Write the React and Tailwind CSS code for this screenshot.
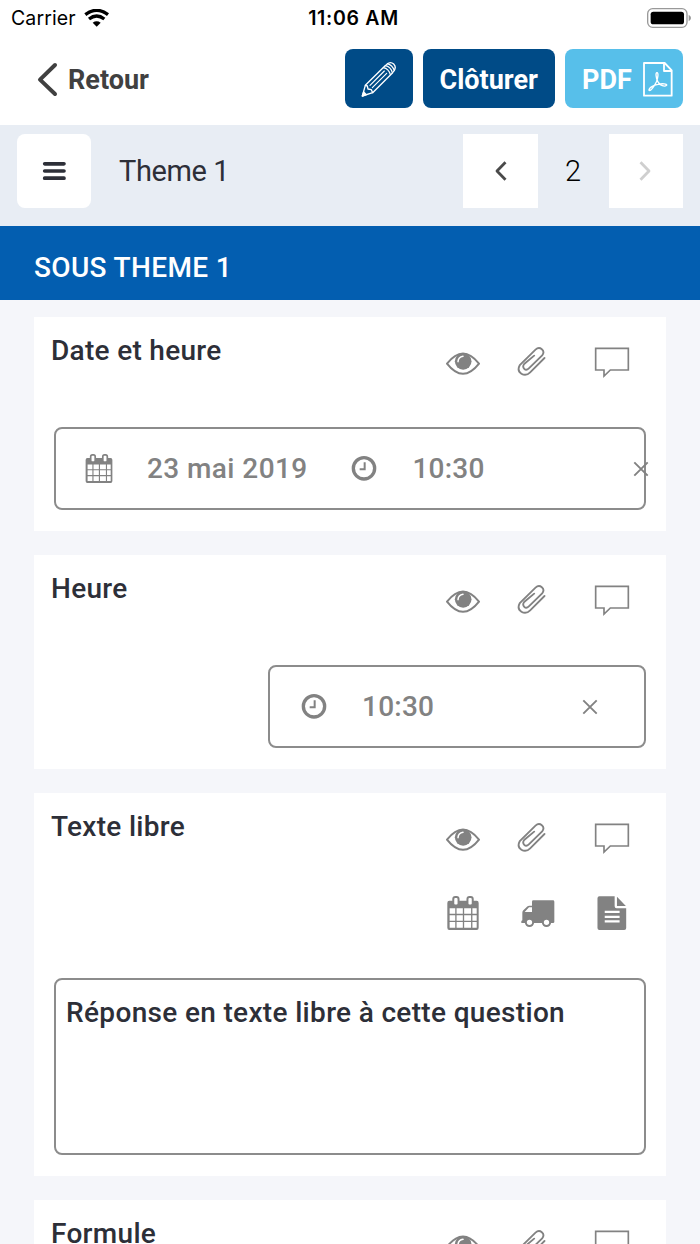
import React from "react";

const Wifi = () => (
  <svg width="25" height="18" viewBox="252 24 75 54" fill="none" stroke="#000" strokeWidth="10">
    <path d="M256 41 Q290 15 324 41" />
    <path d="M267 54 Q290 36 313 54" />
    <path d="M278 65 Q290 57 302 65 L290 77Z" fill="#000" stroke="none" />
  </svg>
);

const Battery = () => (
  <svg width="44" height="20" viewBox="921 21 132 60">
    <rect x="923" y="23" width="118" height="56" rx="15" fill="none" stroke="#999" strokeWidth="4" />
    <rect x="932" y="32" width="100" height="38" rx="8" fill="#000" />
    <path d="M1046 41 Q1053 45 1053 51 Q1053 57 1046 61Z" fill="#999" />
  </svg>
);

const BackChevron = () => (
  <svg width="21" height="35" viewBox="111 185 63 105" fill="none" stroke="#404040" strokeWidth="12" strokeLinecap="round" strokeLinejoin="round">
    <path d="M165 194 L120 238 L165 281" />
  </svg>
);

const Pencil = () => (
  <svg width="36" height="36" viewBox="63 184 108 108" fill="none" stroke="#fff" strokeWidth="4" strokeLinejoin="round" strokeLinecap="round">
    <path d="M67 289 L76 257 L137 197 Q150 183 161 193 Q172 204 158 219 L98 279 Z" />
    <path d="M76 257 L82 259 L84 268 L94 270 L98 279" />
    <path d="M67 289 L71 277 L79 285 Z" fill="#fff" />
    <path d="M90 257 L133 214 M97 264 L140 221" strokeWidth="3.5" />
    <path d="M130 204 Q146 207 151 225 M136 198 Q152 201 157 219 M142 192 Q157 196 163 213" strokeWidth="3.5" />
  </svg>
);

const PdfFile = () => (
  <svg width="30" height="35" viewBox="908 187 90 105" fill="none" stroke="#fff" strokeWidth="5.5" strokeLinejoin="round">
    <path d="M911 190 H973 L994 212 V288 H911 Z" />
    <path d="M971 190 V214 H994" />
    <path d="M950 219 C945 219 947 234 952 245 C959 259 973 262 979 257 C981 252 966 251 953 254 C941 256 925 264 926 272 C931 276 942 259 948 247 C953 235 955 219 950 219Z" strokeWidth="4" />
  </svg>
);

const Menu = () => (
  <svg width="24" height="20" viewBox="127 107 72 60" fill="none" stroke="#2d2f38" strokeWidth="11" strokeLinecap="round">
    <path d="M135 115.500 H193 M135 137 H193 M135 158.500 H193" />
  </svg>
);

const Eye = () => (
  <svg width="34" height="24" viewBox="48 61 102 72" fill="none" stroke="#828282" strokeWidth="6">
    <path d="M51 99 Q99 38 147 99 Q99 160 51 99Z" strokeLinejoin="round" />
    <circle cx="99.500" cy="92" r="25" fill="#828282" stroke="none" />
    <path d="M84 93 Q85 79 99 77" stroke="#fff" strokeWidth="4.500" strokeLinecap="round" />
  </svg>
);

const Clip = () => (
  <svg width="40" height="30" viewBox="260.500 50 120 90" fill="none" stroke="#828282" strokeWidth="5.500" strokeLinecap="round">
    <path d="M343 83 L300 126 C284 142 256 128 269 104 L316 58 C329 46 347 61 336 75 L296 114 C286 124 274 112 282 101 L312 76" />
  </svg>
);

const Comment = () => (
  <svg width="36" height="32" viewBox="492 50 108 96" fill="none" stroke="#828282" strokeWidth="5">
    <path d="M497 54 H595 V119 H541 L522 137 V119 H497 Z" />
  </svg>
);

const Calendar = ({ small }) => (
  <svg width={small ? 28 : 32} height={small ? 29 : 34} viewBox="51 257 97 103">
    <path fill="#828282" fillRule="evenodd" d="M58 271 H141 Q147 271 147 278 V353 Q147 360 141 360 H58 Q52 360 52 353 V278 Q52 271 58 271Z M59 294 V311 H76 V294Z M80 294 V311 H99 V294Z M103 294 V311 H124 V294Z M128 294 V311 H141 V294Z M59 315 V332 H76 V315Z M80 315 V332 H99 V315Z M103 315 V332 H124 V315Z M128 315 V332 H141 V315Z M59 336 V353 H76 V336Z M80 336 V353 H99 V336Z M103 336 V353 H124 V336Z M128 336 V353 H141 V336Z" />
    <rect x="70" y="260" width="16" height="26" rx="6" fill="#fff" stroke="#828282" strokeWidth="6" />
    <rect x="113" y="260" width="16" height="26" rx="6" fill="#fff" stroke="#828282" strokeWidth="6" />
  </svg>
);

const Truck = () => (
  <svg width="34" height="27" viewBox="275 271 102 81">
    <path fill="#828282" fillRule="evenodd" d="M312 272 H371 Q375 272 375 276 V337 Q375 340 371 340 H276 V334 L279 332 V309 Q279 305 282 302 L293 291 Q296 288 300 288 H308 V276 Q308 272 312 272Z M286 307 H308 V293 H299Z" />
    <circle cx="300.500" cy="338" r="11" fill="#fff" stroke="#828282" strokeWidth="6" />
    <circle cx="351.500" cy="338" r="11" fill="#fff" stroke="#828282" strokeWidth="6" />
  </svg>
);

const Doc = () => (
  <svg width="30" height="34" viewBox="500 257 90 103">
    <path fill="#828282" d="M507 258 H553 V288 Q553 294 559 294 H588 V354 Q588 360 582 360 H507 Q501 360 501 354 V264 Q501 258 507 258Z M560 259 L587 287 H560Z" />
    <path d="M523 305 H568 M523 320 H568 M523 334 H568" stroke="#fff" strokeWidth="7" />
  </svg>
);

const Clock = () => (
  <svg width="26" height="26" viewBox="34 121 78 78" fill="none" stroke="#828282">
    <circle cx="73" cy="158" r="32" strokeWidth="10" />
    <path d="M75 140 V161 H60" strokeWidth="6" />
  </svg>
);

const Cross = () => (
  <svg width="16" height="16" viewBox="0 0 16 16" fill="none" stroke="#828282" strokeWidth="1.900">
    <path d="M1.300 1.300 L14.700 14.700 M14.700 1.300 L1.300 14.700" />
  </svg>
);

const Angle = ({ flip }) => (
  <svg width="14" height="22" viewBox="0 0 14 22" className={flip ? "rotate-180" : ""} fill="none" stroke={flip ? "#cfcfcf" : "#4a4a4a"} strokeWidth="2.800">
    <path d="M12.500 2.200 L4 11 L12.500 19.800" strokeLinejoin="round" />
  </svg>
);

function Card({ title, className, tools, children }) {
  return (
    <section className={`w-[631.500px] shrink-0 bg-white ${className}`}>
      <div className="flex justify-between pl-[17px] pr-[16px]">
        <h2 className="mt-[18px] h-8 text-[28px] leading-8 font-medium tracking-[0.3px] text-[#2d2f38]">{title}</h2>
        <div className="mt-[28.300px] grid w-[224px] grid-cols-3 items-center justify-items-center">
          <div className="pt-[1px]"><Eye /></div>
          <Clip />
          <div className="mt-[2px]"><Comment /></div>
          {tools}
        </div>
      </div>
      {children}
    </section>
  );
}

export default function App() {
  return (
    <div className="flex h-[1244px] w-[700px] flex-col overflow-hidden bg-[#f5f6fa] font-['Roboto',sans-serif]">
      <div className="grid h-[36px] shrink-0 grid-cols-3 items-center bg-white pl-[11px] pr-[9px] font-['Inter',sans-serif] text-[19.500px] text-black">
        <div className="flex items-center gap-[8px]">
          <span className="pt-px tracking-[0.1px]">Carrier</span>
          <Wifi />
        </div>
        <span className="pt-px pl-[5px] text-center font-semibold tracking-[0.700px]">11:06 AM</span>
        <div className="flex justify-end"><Battery /></div>
      </div>

      <header className="flex h-[89px] shrink-0 items-start bg-white pl-[37px] pr-[17px] pt-[13px] text-[27px] font-bold">
        <div className="flex h-[60px] items-center gap-[10px] text-[#404040]">
          <BackChevron />
          <span className="pt-[2px]">Retour</span>
        </div>
        <div className="ml-auto flex gap-[10px] text-white">
          <button className="flex h-[59px] w-[67.500px] items-center justify-center rounded-lg bg-[#004b87]"><Pencil /></button>
          <button className="flex h-[59px] w-[132.500px] items-center justify-center rounded-lg bg-[#004b87] pt-[3px]">Clôturer</button>
          <button className="flex h-[59px] w-[118px] items-center gap-[11px] rounded-lg bg-[#57bfea] pl-[17px]">
            <span className="pt-[3px]">PDF</span>
            <div className="pt-[2px]"><PdfFile /></div>
          </button>
        </div>
      </header>

      <nav className="flex h-[101.400px] shrink-0 items-start bg-[#e8edf4] px-[17px] pt-[9px] text-[29px]">
        <button className="flex size-[74px] items-center justify-center rounded-lg bg-white"><Menu /></button>
        <span className="ml-[28px] leading-[74px] tracking-[-0.400px] text-[#2d2f38]">Theme 1</span>
        <div className="ml-auto flex">
          <button className="flex h-[74px] w-[74.500px] items-center justify-center bg-white"><Angle /></button>
          <span className="w-[71px] text-center leading-[74px] font-light text-black">2</span>
          <button className="flex h-[74px] w-[74.500px] items-center justify-center bg-white"><Angle flip /></button>
        </div>
      </nav>

      <div className="h-[74px] shrink-0 bg-[#035eb0] pl-[34px] text-[28px] leading-[84px] font-medium tracking-[0.350px] text-white">SOUS THEME 1</div>

      <main className="flex flex-col gap-[24px] pl-[34px] pt-[16.400px]">
        <Card title="Date et heure" className="h-[214.200px]">
          <div className="mx-[19.600px] mt-[48px] flex h-[83px] items-center rounded-lg border-2 border-[#8c8c8c] pl-[29.400px] text-[28px] font-medium text-[#828282]">
            <Calendar small />
            <span className="ml-[34px] w-[160px] whitespace-nowrap tracking-[0.420px]">23 mai 2019</span>
            <div className="ml-[44.500px]"><Clock /></div>
            <span className="ml-[35px] tracking-[0.200px]">10:30</span>
            <div className="-mr-[4.700px] ml-auto"><Cross /></div>
          </div>
        </Card>

        <Card title="Heure" className="h-[214.200px]">
          <div className="mr-[19.600px] ml-[234.400px] mt-[48px] flex h-[83px] items-center rounded-lg border-2 border-[#8c8c8c] pl-[30.200px] text-[28px] font-medium text-[#828282]">
            <Clock />
            <span className="ml-[35.500px] tracking-[0.200px]">10:30</span>
            <div className="mr-[46px] ml-auto"><Cross /></div>
          </div>
        </Card>

        <Card
          title="Texte libre"
          className="h-[383px]"
          tools={
            <>
              <div className="mt-[40.500px]"><Calendar /></div>
              <div className="mt-[41px] pl-[2px]"><Truck /></div>
              <div className="mt-[40.500px]"><Doc /></div>
            </>
          }
        >
          <div className="mx-[19.600px] mt-[48px] h-[177px] rounded-lg border-2 border-[#8c8c8c] px-[10.500px] pt-[17px] text-[28px] leading-8 font-medium whitespace-nowrap tracking-[0.330px] text-[#2d2f38]">
            Réponse en texte libre à cette question
          </div>
        </Card>

        <Card title="Formule" className="h-[214px]" />
      </main>
    </div>
  );
}
